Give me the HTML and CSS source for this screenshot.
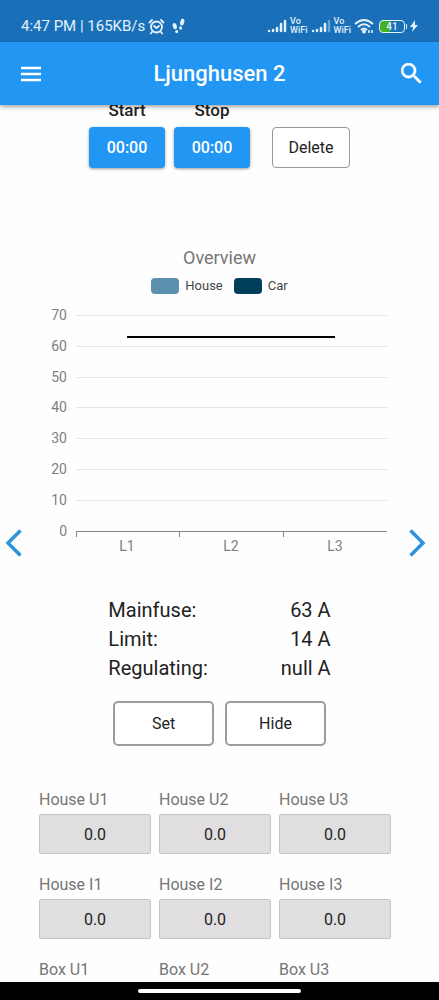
FILE: index.html
```html
<!DOCTYPE html>
<html lang="en">
<head>
    <meta charset="UTF-8">
    <meta name="viewport" content="width=device-width, initial-scale=1.0">
    <title>Ljunghusen 2</title>
    <link rel="stylesheet" href="styles.css">
</head>
<body>

    <div class="status-bar">
        <div class="status-left">
            <span>4:47 PM | 165KB/s</span>
            <svg width="17" height="17" viewBox="0 0 17 17" fill="none" stroke="currentColor" stroke-width="1.8" stroke-linecap="round">
                <circle cx="8.5" cy="9" r="5.5"/>
                <path d="M6 8l2.500 2L11 8M1.500 4.500L4 2M15.500 4.500L13 2M4 14l-1.200 1.500M13 14l1.200 1.500"/>
            </svg>
            <svg class="steps" width="13" height="16" viewBox="0 0 13 16" fill="currentColor">
                <ellipse cx="2.800" cy="8" rx="2" ry="3.200" transform="rotate(-14 3 8)"/>
                <ellipse cx="4.600" cy="13.600" rx="1.500" ry="1.700"/>
                <ellipse cx="10.300" cy="4" rx="2" ry="3.500" transform="rotate(14 10 4)"/>
                <ellipse cx="8.600" cy="10" rx="1.500" ry="1.700"/>
            </svg>
        </div>
        <div class="status-right">
            <svg width="20" height="14" viewBox="0 0 20 14" stroke="currentColor" stroke-width="2.5" stroke-linecap="round">
                <path d="M2 12v0M6 12v-1M10 12V9M14 12V5M18 12V2"/>
            </svg>
            <span class="vowifi"><span>Vo</span><span>WiFi</span></span>
            <svg width="20" height="14" viewBox="0 0 20 14" stroke="currentColor" stroke-width="2.5" stroke-linecap="round">
                <path d="M2 12v0M6 12v-1M10 12V9M14 12V5"/>
                <path d="M18 12V2" opacity="0.4"/>
            </svg>
            <span class="vowifi"><span>Vo</span><span>WiFi</span></span>
            <svg width="20" height="16" viewBox="0 0 20 16" fill="none" stroke="currentColor" stroke-width="2">
                <path d="M1 6Q10-2 19 6M4 9Q10 3.500 16 9M7 12Q10 9 13 12"/>
                <circle cx="10" cy="13.500" r="1" fill="currentColor"/>
                <path d="M15 12v3M18 12v3" stroke-width="1.500"/>
            </svg>
            <span class="battery"><span class="battery-level">41</span><span class="battery-tip"></span></span>
            <svg width="8" height="12" viewBox="0 0 8 12" fill="currentColor">
                <path d="M5 0L0 7h3L2 12 8 5H5z"/>
            </svg>
        </div>
    </div>

    <header class="app-bar">
        <button class="icon-button" aria-label="Menu">
            <svg width="22" height="16" viewBox="0 0 22 16" stroke="currentColor" stroke-width="2.5">
                <path d="M1 2h20M1 8h20M1 14h20"/>
            </svg>
        </button>
        <h1>Ljunghusen 2</h1>
        <button class="icon-button search" aria-label="Search">
            <svg width="21" height="21" viewBox="3 3 18 18" fill="currentColor" stroke="currentColor" stroke-width="0.4">
                <path d="M15.5 14h-.79l-.28-.27A6.47 6.47 0 0 0 16 9.500 6.500 6.500 0 1 0 9.500 16c1.610 0 3.090-.590 4.230-1.570l.270.280v.790l5 4.990L20.490 19l-4.990-5zm-6 0C7.010 14 5 11.990 5 9.500S7.010 5 9.500 5 14 7.010 14 9.500 11.990 14 9.500 14z"/>
            </svg>
        </button>
    </header>

    <main>
        <div class="schedule">
            <div class="time">
                <span id="start">Start</span>
                <button class="time-button" aria-describedby="start">00:00</button>
            </div>
            <div class="time">
                <span id="stop">Stop</span>
                <button class="time-button" aria-describedby="stop">00:00</button>
            </div>
            <button class="delete-button">Delete</button>
        </div>

        <section class="overview">
            <h2>Overview</h2>
            <div class="legend">
                <span class="swatch house"></span><span>House</span>
                <span class="swatch car"></span><span>Car</span>
            </div>
            <div class="carousel">
                <button class="arrow" aria-label="Previous">
                    <svg width="17" height="28" viewBox="0 0 17 28" fill="none" stroke="currentColor" stroke-width="3.5">
                        <path d="M15.500 1.500L3 14l12.500 12.500"/>
                    </svg>
                </button>
                <svg class="chart" viewBox="0 0 375 252">
                    <g class="grid">
                        <path d="M44 10.500h311M44 41.500h311M44 72.500h311M44 102.500h311M44 133.500h311M44 164.500h311M44 195.500h311"/>
                    </g>
                    <path class="axis" d="M44.500 232v-5.500H355M147.500 226v6M251.500 226v6"/>
                    <path class="fuse-line" d="M95 32h208"/>
                    <g class="y-labels">
                        <text x="35" y="15">70</text>
                        <text x="35" y="46">60</text>
                        <text x="35" y="77">50</text>
                        <text x="35" y="107">40</text>
                        <text x="35" y="138">30</text>
                        <text x="35" y="169">20</text>
                        <text x="35" y="200">10</text>
                        <text x="35" y="231">0</text>
                    </g>
                    <g class="x-labels">
                        <text x="95" y="246">L1</text>
                        <text x="199" y="246">L2</text>
                        <text x="303" y="246">L3</text>
                    </g>
                </svg>
                <button class="arrow" aria-label="Next">
                    <svg width="17" height="28" viewBox="0 0 17 28" fill="none" stroke="currentColor" stroke-width="3.5">
                        <path d="M1.500 1.500L14 14 1.500 26.500"/>
                    </svg>
                </button>
            </div>
        </section>

        <dl class="limits">
            <dt>Mainfuse:</dt><dd>63 A</dd>
            <dt>Limit:</dt><dd>14 A</dd>
            <dt>Regulating:</dt><dd>null A</dd>
        </dl>

        <div class="actions">
            <button>Set</button>
            <button>Hide</button>
        </div>

        <div class="fields">
            <label>House U1 <input type="text" value="0.0" readonly></label>
            <label>House U2 <input type="text" value="0.0" readonly></label>
            <label>House U3 <input type="text" value="0.0" readonly></label>
            <label>House I1 <input type="text" value="0.0" readonly></label>
            <label>House I2 <input type="text" value="0.0" readonly></label>
            <label>House I3 <input type="text" value="0.0" readonly></label>
            <label>Box U1 <input type="text" value="0.0" readonly></label>
            <label>Box U2 <input type="text" value="0.0" readonly></label>
            <label>Box U3 <input type="text" value="0.0" readonly></label>
        </div>
    </main>

    <div class="nav-bar"><span class="nav-handle"></span></div>

</body>
</html>
```
FILE: styles.css
```css
* {
    box-sizing: border-box;
}

body {
    margin: 0;
    height: 100vh;
    display: flex;
    flex-direction: column;
    overflow: hidden;
    background-color: #fefefe;
    color: #222;
    font-family: Roboto, sans-serif;
    font-size: 16px;
    line-height: 20px;
}

button, input {
    font: inherit;
    color: inherit;
    cursor: pointer;
}

/* phone status bar */
.status-bar {
    flex: none;
    display: flex;
    justify-content: space-between;
    padding: 16px 21px 6px;
    background-color: #1a70b8;
    color: #e3f2fd;
    font-size: 15px;
}

.status-left, .status-right {
    display: flex;
    align-items: center;
    gap: 3px;
}

.steps {
    margin-left: 4px;
}

.vowifi {
    display: flex;
    flex-direction: column;
    font-size: 9px;
    line-height: 9px;
    font-weight: 500;
}

.battery {
    display: flex;
    align-items: center;
    gap: 1px;
    margin-left: 2px;
}

.battery-level {
    width: 26px;
    height: 13px;
    border: 1px solid #e3f2fd;
    border-radius: 4px;
    background: linear-gradient(to right, #43b02a 40%, transparent 40%);
    font-size: 10px;
    line-height: 11px;
    font-weight: 500;
    text-align: center;
}

.battery-tip {
    width: 1px;
    height: 5px;
    background-color: #e3f2fd;
}

/* app bar */
.app-bar {
    flex: none;
    display: grid;
    grid-template-columns: 1fr auto 1fr;
    align-items: center;
    height: 63px;
    background-color: #2196f3;
    color: #fff;
    box-shadow: 0 2px 4px rgba(0, 0, 0, 0.35);
    z-index: 1;
}

.app-bar h1 {
    margin: 0;
    font-size: 22px;
    line-height: 24px;
    font-weight: 500;
}

.icon-button, .arrow {
    display: flex;
    padding: 0;
    border: none;
    background: none;
}

.icon-button {
    padding: 0 20px;
}

.search {
    justify-self: end;
    padding: 0 17px;
}

main {
    flex: 1;
    min-height: 0;
    margin-top: -5px;
    overflow: hidden;
}

.schedule {
    display: flex;
    justify-content: center;
    align-items: flex-end;
    gap: 9px;
}

.time {
    display: flex;
    flex-direction: column;
    align-items: center;
    gap: 7px;
    font-size: 17px;
    font-weight: 500;
}

.time-button, .delete-button {
    height: 41px;
    border-radius: 4px;
}

.time-button {
    width: 76px;
    padding: 0;
    border: none;
    background-color: #2196f3;
    color: #fff;
    font-size: 16px;
    box-shadow: 0 1px 3px rgba(0, 0, 0, 0.4);
}

.delete-button {
    width: 78px;
    margin-left: 13px;
    padding: 0;
    border: 1px solid #999;
    background-color: #fff;
}

/* chart */
.overview {
    margin-top: 80px;
}

.overview h2 {
    margin: 0;
    font-size: 18px;
    font-weight: 400;
    text-align: center;
    color: #757575;
}

.legend {
    display: flex;
    justify-content: center;
    align-items: center;
    gap: 6px;
    margin-top: 8px;
    font-size: 13px;
    color: #444;
}

.swatch {
    width: 28px;
    height: 16px;
    border-radius: 4px;
}

.house {
    background-color: #5b90af;
}

.car {
    margin-left: 5px;
    background-color: #003f5c;
}

.carousel {
    display: flex;
    align-items: flex-end;
    margin-top: 9px;
}

.arrow {
    flex: none;
    width: 32px;
    padding-left: 5px;
    color: #2e93dc;
}

.arrow:last-child {
    padding-left: 2px;
}

.chart {
    flex: 1;
    min-width: 0;
    font-size: 14px;
    fill: #808080;
}

.grid {
    stroke: #e4e4e8;
}

.axis {
    fill: none;
    stroke: #858585;
}

.fuse-line {
    stroke: #000;
    stroke-width: 2;
}

.y-labels {
    text-anchor: end;
}

.x-labels {
    text-anchor: middle;
}

/* fuse limits */
.limits {
    display: grid;
    grid-template-columns: auto auto;
    justify-content: center;
    column-gap: 73px;
    margin: 39px 0 0;
    font-size: 20px;
    line-height: 29px;
}

.limits dd {
    margin: 0;
    text-align: right;
}

.actions {
    display: flex;
    justify-content: center;
    gap: 11px;
    margin-top: 18px;
}

.actions button {
    width: 101px;
    height: 45px;
    border: 2px solid #9c9c9c;
    border-radius: 5px;
    background-color: #fff;
}

/* readings */
.fields {
    display: grid;
    grid-template-columns: repeat(3, 1fr);
    gap: 21px 8px;
    padding: 0 48px 0 39px;
    margin-top: 44px;
    color: #757575;
}

.fields input {
    display: block;
    width: 100%;
    height: 40px;
    margin-top: 4px;
    border: 1px solid #c4c3c6;
    border-radius: 2px;
    background-color: #e0dee1;
    color: #222;
    text-align: center;
}

/* gesture bar */
.nav-bar {
    flex: none;
    display: flex;
    justify-content: center;
    align-items: center;
    height: 18px;
    background-color: #000;
    z-index: 1;
}

.nav-handle {
    width: 37%;
    height: 4px;
    border-radius: 2px;
    background-color: #fff;
}
```
